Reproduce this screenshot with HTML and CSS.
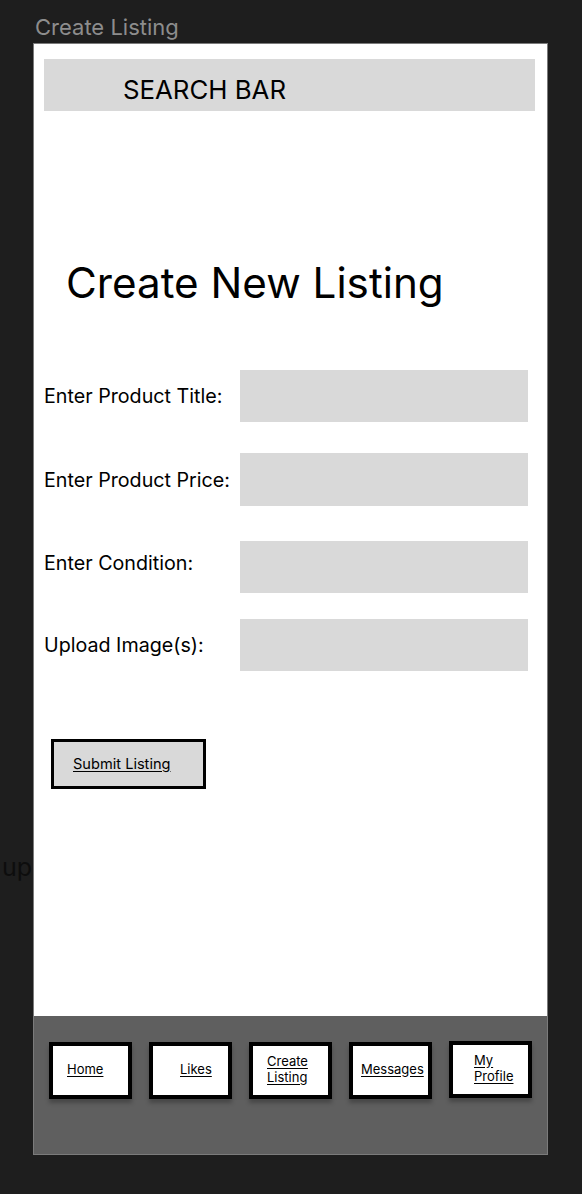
FILE: index.html
```html
<!DOCTYPE html>
<html>
<head>
<meta charset="utf-8">
<link rel="stylesheet" href="styles.css">
</head>
<body>
<div class="page">
  <div class="caption">Create Listing</div>
  <div class="behind">up</div>
  <div class="frame">
    <main class="content">
      <div class="search">SEARCH BAR</div>
      <h1 class="heading">Create New Listing</h1>
      <form class="form">
        <div class="row">
          <label class="label">Enter Product Title:</label>
          <div class="field"></div>
        </div>
        <div class="row row-price">
          <label class="label">Enter Product Price:</label>
          <div class="field"></div>
        </div>
        <div class="row row-condition">
          <label class="label label-raised">Enter Condition:</label>
          <div class="field"></div>
        </div>
        <div class="row row-upload">
          <label class="label">Upload Image(s):</label>
          <div class="field"></div>
        </div>
        <div class="submit"><span class="link">Submit Listing</span></div>
      </form>
    </main>
    <nav class="nav">
      <div class="tab tab-home"><span class="link">Home</span></div>
      <div class="tab tab-likes"><span class="link">Likes</span></div>
      <div class="tab tab-create"><span class="link">Create<br>Listing</span></div>
      <div class="tab tab-messages"><span class="link">Messages</span></div>
      <div class="tab tab-profile"><span class="link">My<br>Profile</span></div>
    </nav>
  </div>
</div>
</body>
</html>
```

FILE: styles.css
```css
html, body {
  margin: 0;
  padding: 0;
  background: #1e1e1e;
}

body {
  font-family: Inter, "Noto Sans", "Liberation Sans", sans-serif;
  color: #000;
}

.page {
  position: relative;
  width: 582px;
  height: 1194px;
  overflow: hidden;
}

.caption {
  padding: 14px 0 0 35px;
  height: 29px;
  font-size: 22px;
  line-height: 26px;
  color: #8d8d8d;
}

.behind {
  position: absolute;
  left: 2px;
  top: 852px;
  font-size: 25px;
  line-height: 30px;
  color: #0d0d0d;
  z-index: 0;
}

.frame {
  position: relative;
  z-index: 1;
  margin-left: 33px;
  width: 513px;
  height: 1110px;
  border: 1px solid #7b7b7b;
  display: flex;
  flex-direction: column;
  background: #fff;
}

.content {
  flex: 1;
  padding: 15px 12px 0 10px;
}

.search {
  height: 52px;
  background: #d9d9d9;
  font-size: 25.8px;
  line-height: 43px;
  padding: 9px 0 0 79px;
  box-sizing: border-box;
}

.heading {
  margin: 148px 0 0 22px;
  font-size: 42.2px;
  line-height: 48px;
  font-weight: 400;
}

.form {
  margin-top: 63px;
}

.row {
  display: flex;
  align-items: center;
  height: 52px;
}

.row-price {
  margin-top: 31px;
  height: 53px;
}

.row-condition {
  margin-top: 35px;
}

.row-upload {
  margin-top: 26px;
}

.label {
  width: 196px;
  font-size: 19.7px;
  line-height: 24px;
}

.label-raised {
  margin-bottom: 9px;
}

.field {
  width: 288px;
  height: 100%;
  background: #d9d9d9;
}

.submit {
  margin: 68px 0 0 7px;
  width: 155px;
  height: 50px;
  box-sizing: border-box;
  border: 3px solid #000;
  background: #d9d9d9;
  display: flex;
  align-items: center;
  padding-left: 19px;
  font-size: 14.6px;
}

.link {
  text-decoration: underline;
  text-underline-offset: 2px;
}

.nav {
  height: 138px;
  background: #5f5f5f;
  display: flex;
  gap: 17px;
  padding: 26px 0 0 15px;
  box-sizing: border-box;
  align-items: flex-start;
}

.tab {
  width: 83px;
  height: 57px;
  box-sizing: border-box;
  border: 4px solid #000;
  background: #fff;
  box-shadow: 0 4px 4px rgba(0, 0, 0, 0.25);
  display: flex;
  align-items: center;
  padding-bottom: 4px;
  font-size: 13px;
  line-height: 16px;
}

.tab-home { padding-left: 14px; }
.tab-likes { padding-left: 27px; }
.tab-create { padding-left: 14px; }
.tab-messages { padding-left: 8px; }
.tab-profile { padding-left: 21px; margin-top: -1px; }
```
